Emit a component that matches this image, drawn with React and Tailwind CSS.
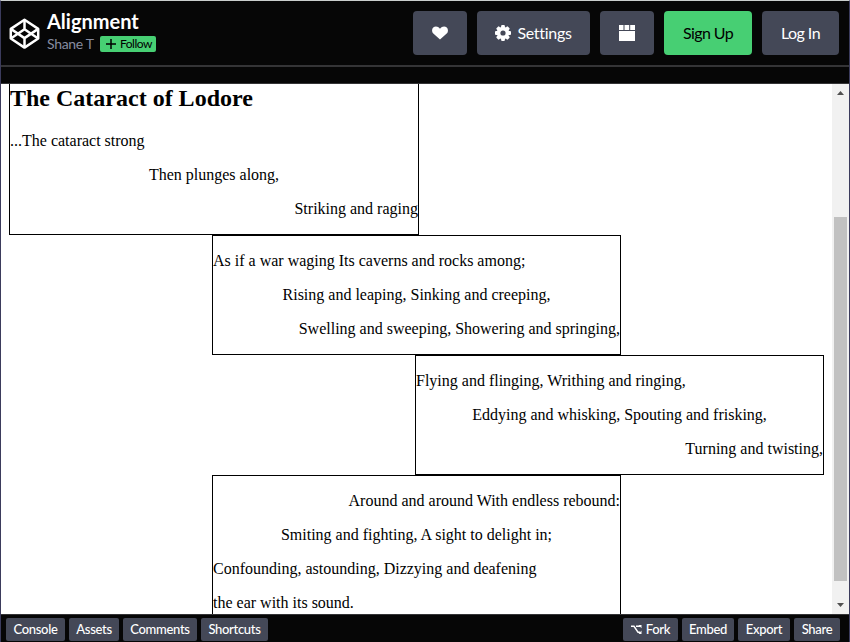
const headerButton =
  "flex h-11 shrink-0 items-center justify-center rounded bg-[#444857] text-base text-white";
const footerButton =
  "flex h-[23px] items-center justify-center rounded-[2px] bg-[#444857] text-[13px] leading-none tracking-[-0.3px] text-white font-medium";

function Logo() {
  return (
    <svg className="mt-[17px] h-[31px] w-[31px] shrink-0" viewBox="0 0 31 31" fill="none" stroke="#fff" strokeWidth="2.5" strokeLinejoin="round">
      <path d="M15.5 1.8 29.2 10.9V20.5L15.5 29.6 1.8 20.5V10.9Z" />
      <path d="M1.8 10.9 15.5 20.1 29.2 10.9M1.8 20.5 15.5 11.3 29.2 20.5M15.5 1.8V11.3M15.5 20.1V29.6" />
    </svg>
  );
}

function Gear() {
  return (
    <svg className="h-4 w-4" viewBox="0 0 16 16">
      <g fill="#fff">
        <rect x="6.1" y="0" width="3.8" height="16" rx="1" />
        <rect x="6.1" y="0" width="3.8" height="16" rx="1" transform="rotate(45 8 8)" />
        <rect x="6.1" y="0" width="3.8" height="16" rx="1" transform="rotate(90 8 8)" />
        <rect x="6.1" y="0" width="3.8" height="16" rx="1" transform="rotate(135 8 8)" />
        <circle cx="8" cy="8" r="6.2" />
      </g>
      <circle cx="8" cy="8" r="2.6" fill="#444857" />
    </svg>
  );
}

function Header() {
  return (
    <header className="flex h-16 shrink-0 pl-[7.5px] pr-[10px]">
      <Logo />
      <div className="ml-[7.5px] pt-2">
        <h1 className="text-[20px] font-bold leading-6 text-white">Alignment</h1>
        <div className="mt-[3px] flex items-center gap-[6px]">
          <span className="w-[47px] text-[14px] leading-4 tracking-[-0.3px] whitespace-nowrap text-[#868ca0]">Shane T</span>
          <button className="flex h-4 w-14 items-center gap-[4px] rounded-[2px] bg-[#47cf73] pl-[6px] text-[12px] leading-none text-black">
            <svg className="h-[10px] w-[10px] shrink-0" viewBox="0 0 10 10" stroke="#000" strokeWidth="1.5">
              <path d="M5 0V10M0 5H10" />
            </svg>
            <span className="tracking-[-0.5px]">Follow</span>
          </button>
        </div>
      </div>
      <div className="ml-auto flex gap-[10px] pt-[10px]">
        <button className={`${headerButton} w-[54px]`}>
          <svg className="h-[14px] w-4" viewBox="0 0 16 14" fill="#fff">
            <path d="M8 13.6 1.3 7.5C-.4 5.8-.3 3 1.2 1.5 3 0 6 0 8 2.7 10 0 13 0 14.8 1.5 16.3 3 16.4 5.8 14.7 7.5Z" />
          </svg>
        </button>
        <button className={`${headerButton} w-[113px] gap-[6px]`}>
          <Gear />
          <span className="tracking-[-0.3px]">Settings</span>
        </button>
        <button className={`${headerButton} w-[54px]`}>
          <svg className="h-4 w-4" viewBox="0 0 16 16" fill="#fff">
            <path d="M0 0H4.5V5H0ZM5.5 0H10.2V5H5.5ZM11.2 0H16V5H11.2ZM0 6H16V16H0Z" />
          </svg>
        </button>
        <button className="flex h-11 w-[88px] items-center justify-center rounded bg-[#47cf73] text-base tracking-[-0.6px] text-black">Sign Up</button>
        <button className={`${headerButton} w-[77px] tracking-[-0.55px]`}>Log In</button>
      </div>
    </header>
  );
}

function Scrollbar() {
  return (
    <div className="flex w-[17px] shrink-0 flex-col items-center bg-[#f1f1f1]">
      <svg className="h-[17px] w-[17px] shrink-0" viewBox="0 0 17 17" fill="#505050">
        <path d="M5 11 8.5 7 12 11Z" />
      </svg>
      <div className="mt-[116px] h-[364px] w-[13px] bg-[#c1c1c1]" />
      <svg className="mt-auto h-[17px] w-[17px] shrink-0" viewBox="0 0 17 17" fill="#505050">
        <path d="M5 6 8.5 10 12 6Z" />
      </svg>
    </div>
  );
}

const stanza = "flex h-[120px] w-[409px] shrink-0 flex-col gap-4 border border-black pt-4 whitespace-nowrap";

function Poem() {
  return (
    <main className="flex-1 overflow-hidden bg-white pl-2 font-['Liberation_Serif',serif] text-base leading-[18px] text-black">
      <section className="flex h-[151px] w-[410px] flex-col gap-4 border-x border-b border-black">
        <h2 className="mt-[1px] mb-[4px] text-2xl font-bold leading-[27px]">The Cataract of Lodore</h2>
        <p>...The cataract strong</p>
        <p className="text-center">Then plunges along,</p>
        <p className="text-right">Striking and raging</p>
      </section>
      <section className={`${stanza} ml-[203px]`}>
        <p>As if a war waging Its caverns and rocks among;</p>
        <p className="text-center">Rising and leaping, Sinking and creeping,</p>
        <p className="text-right">Swelling and sweeping, Showering and springing,</p>
      </section>
      <section className={`${stanza} ml-[406px]`}>
        <p>Flying and flinging, Writhing and ringing,</p>
        <p className="text-center">Eddying and whisking, Spouting and frisking,</p>
        <p className="text-right">Turning and twisting,</p>
      </section>
      <section className="ml-[203px] flex h-[154px] w-[409px] flex-col gap-4 border border-black pt-4 whitespace-nowrap">
        <p className="text-right">Around and around With endless rebound:</p>
        <p className="text-center">Smiting and fighting, A sight to delight in;</p>
        <p>Confounding, astounding, Dizzying and deafening</p>
        <p>the ear with its sound.</p>
      </section>
    </main>
  );
}

function Footer() {
  return (
    <footer className="flex h-7 shrink-0 gap-1 border-t border-[#343436] pl-[5px] pr-[9px] pt-[3px]">
      <button className={`${footerButton} w-[59px]`}>Console</button>
      <button className={`${footerButton} w-[50px]`}>Assets</button>
      <button className={`${footerButton} w-[74px]`}>Comments</button>
      <button className={`${footerButton} w-[67px]`}>Shortcuts</button>
      <button className={`${footerButton} ml-auto w-[55px] gap-1`}>
        <svg className="h-[9px] w-[11px]" viewBox="0 0 11 9" fill="none" stroke="#fff" strokeWidth="1.4">
          <path d="M0 1.3H3L7 7.2H9M5 1.3H9.5" />
          <path d="M7.5 0H10.5V3.2ZM10.5 5.5V9H7.5Z" fill="#fff" stroke="none" />
        </svg>
        Fork
      </button>
      <button className={`${footerButton} w-[52px]`}>Embed</button>
      <button className={`${footerButton} w-[52px]`}>Export</button>
      <button className={`${footerButton} w-[46px]`}>Share</button>
    </footer>
  );
}

export default function App() {
  return (
    <div className="flex h-[642px] w-[850px] flex-col overflow-hidden border-x border-t border-x-[#3b3b5c] border-t-[#c9cdcc] bg-[#060606] font-['Lato',sans-serif]">
      <Header />
      <div className="h-[19px] shrink-0 border-b border-t-2 border-[#343436]" />
      <div className="flex h-[530px] shrink-0">
        <Poem />
        <Scrollbar />
      </div>
      <Footer />
    </div>
  );
}
